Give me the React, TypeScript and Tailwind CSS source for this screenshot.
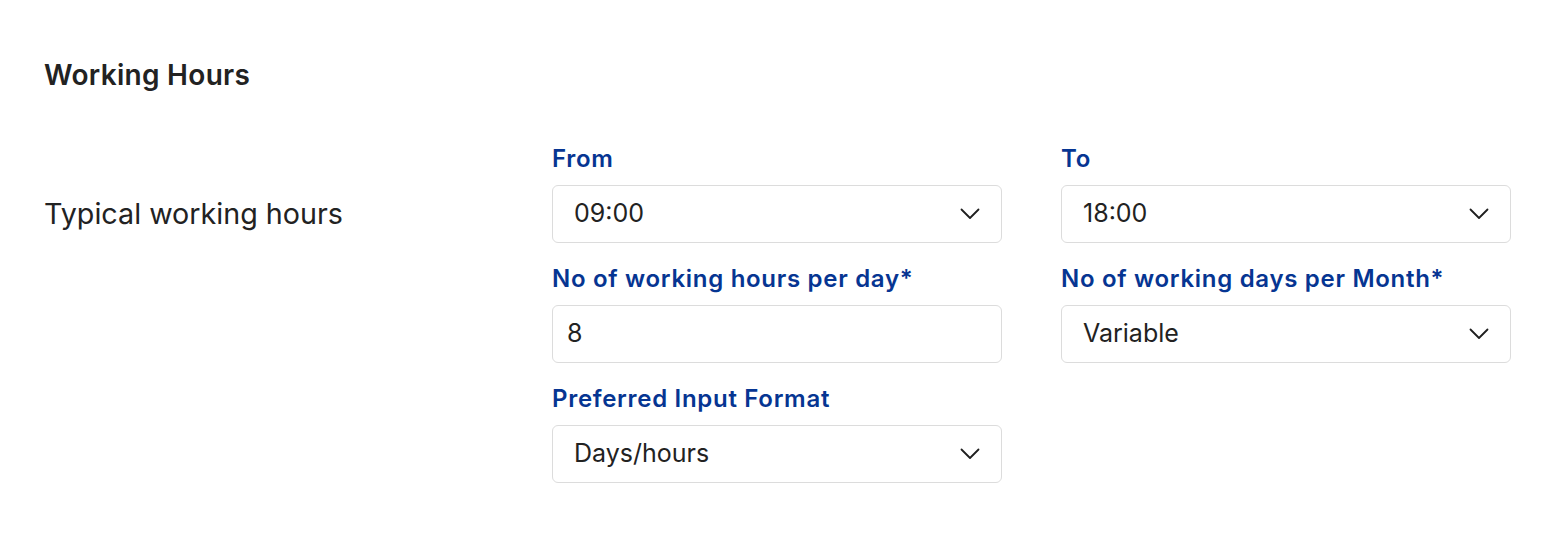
import React from "react";

const Chevron = () => (
  <svg width="20" height="12" viewBox="0 0 20 12" fill="none" className="shrink-0">
    <path d="M1.5 1.5L10 10L18.5 1.5" stroke="#1f1f1f" strokeWidth="1.8" strokeLinecap="round" strokeLinejoin="round" />
  </svg>
);

const Field = ({ label, value, select = true }: { label: string; value: string; select?: boolean }) => (
  <div className="flex flex-col gap-[10px]">
    <label className="text-[24px] leading-[32px] font-semibold tracking-[0.7px] text-[#063592]">{label}</label>
    <div
      className={
        select
          ? "h-[58px] flex items-center justify-between border border-[#dcdcdc] rounded-md pl-[21px] pr-[21px] bg-white"
          : "h-[58px] flex items-center border border-[#dcdcdc] rounded-md pl-[14px] pr-[21px] bg-white"
      }
    >
      <span className="text-[25px] text-[#222222]">{value}</span>
      {select && <Chevron />}
    </div>
  </div>
);

export default function App() {
  return (
    <div className="min-h-screen bg-white pl-[44px] pt-[57px] font-['Inter',sans-serif]">
      <h2 className="text-[28px] leading-[36px] font-semibold tracking-[0.3px] text-[#222222]">Working Hours</h2>
      <div className="flex mt-[50px]">
        <div className="w-[508px] shrink-0 mt-[42px] h-[58px] flex items-center">
          <span className="text-[28.7px] text-[#222222]">Typical working hours</span>
        </div>
        <div className="grid grid-cols-[450px_450px] gap-x-[59px] gap-y-[20px]">
          <Field label="From" value="09:00" />
          <Field label="To" value="18:00" />
          <Field label="No of working hours per day*" value="8" select={false} />
          <Field label="No of working days per Month*" value="Variable" />
          <Field label="Preferred Input Format" value="Days/hours" />
        </div>
      </div>
    </div>
  );
}
